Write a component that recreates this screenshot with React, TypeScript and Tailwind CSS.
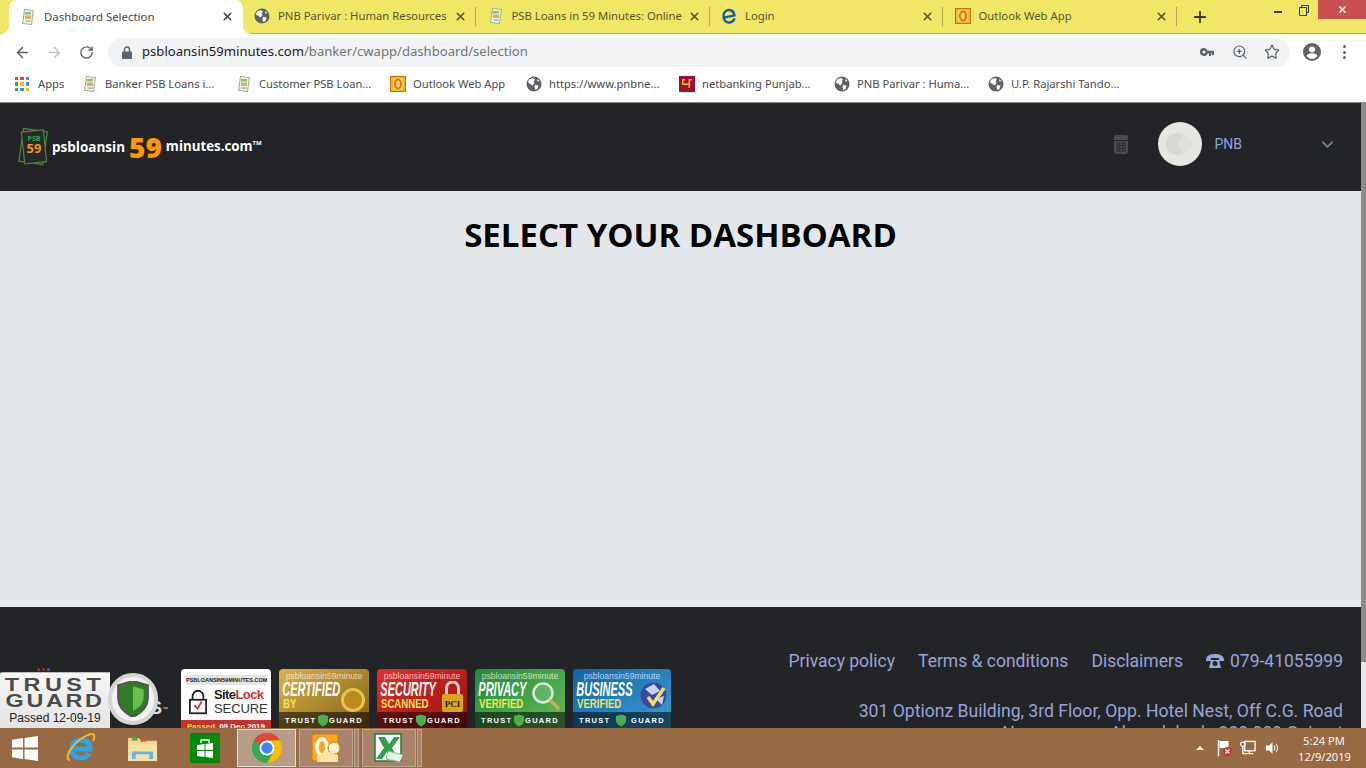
import { ArrowLeft, ArrowRight, ChevronDown, Plus, RotateCw, Star, X, ZoomIn } from "lucide-react";

// tab and bookmark favicons
function PsbIcon() {
  return (
    <svg width="16" height="16" viewBox="0 0 16 16" className="shrink-0">
      <rect x="3.5" y="1" width="9" height="14" fill="#eef3e4" stroke="#93b87a" strokeWidth="1" transform="rotate(8 8 8)" />
      <rect x="5" y="3" width="6" height="2.5" fill="#8dbb8f" />
      <rect x="5" y="6.5" width="6" height="3.5" fill="#e9a85a" />
      <rect x="5.5" y="11" width="5" height="2" fill="#a9c6d4" />
    </svg>
  );
}

function GlobeIcon() {
  return (
    <svg width="16" height="16" viewBox="0 0 16 16" className="shrink-0">
      <circle cx="8" cy="8" r="7.5" fill="#5f6368" />
      <path d="M3 3.5 L7 2 L9 3.5 L7.5 5.5 L8.5 7 L6.5 9.5 L4.5 8 L2 6.5 Z M9 9 L12.5 9.5 L11.5 13 L9.5 14 L8.5 11.5 Z M11 3 L13.5 5 L11.5 5.5 Z" fill="#fff" />
    </svg>
  );
}

function OutlookFav() {
  return (
    <svg width="16" height="16" viewBox="0 0 16 16" className="shrink-0">
      <rect x="0.5" y="0.5" width="15" height="15" fill="#f5b324" stroke="#c96f0a" />
      <rect x="3" y="2.5" width="10" height="11" fill="#fbd873" />
      <ellipse cx="8" cy="8" rx="3" ry="4.5" fill="none" stroke="#d9780c" strokeWidth="2.2" />
    </svg>
  );
}

function IeFav() {
  return (
    <svg width="16" height="18" viewBox="0 0 16 18" className="shrink-0">
      <path d="M2.5 9.5 H13.5 C13.5 5.5 11.5 3 8 3 C4.5 3 2.5 6 2.5 9.5 C2.5 13 4.5 15.5 8 15.5 C10.5 15.5 12 14.2 13 12.5" fill="none" stroke="#0b5ea8" strokeWidth="2.4" transform="rotate(-12 8 9)" />
    </svg>
  );
}

function PnbFav() {
  return (
    <svg width="16" height="16" viewBox="0 0 16 16" className="shrink-0">
      <rect width="16" height="16" fill="#9c1237" />
      <path d="M3 3 H6 V4.5 H4.5 V7.5 H9.5 V3 H13 V4.5 H11 V12 H9.5 V9 H3 Z" fill="#f5b324" />
    </svg>
  );
}

function Tab({ icon, title }: { icon: React.ReactNode; title: string }) {
  return (
    <div className="flex h-[33px] w-[233.5px] shrink-0 items-center pb-[1px] pl-[11.5px]">
      {icon}
      <span className="ml-[8px] flex-1 overflow-hidden whitespace-nowrap text-[11.3px] text-[#55533a]">{title}</span>
      <X size={13} strokeWidth={3} className="ml-[6px] shrink-0 text-[#55533a]" />
      <span className="ml-[8px] h-[19px] w-px shrink-0 bg-[#a9a352]" />
    </div>
  );
}

function Bookmark({ icon, title, width }: { icon: React.ReactNode; title: string; width: string }) {
  return (
    <div className={`flex shrink-0 items-center gap-[7px] ${width}`}>
      {icon}
      <span className="whitespace-nowrap text-[11.2px] text-[#4a4a4a]">{title}</span>
    </div>
  );
}

function MiniShield({ className }: { className?: string }) {
  return (
    <svg viewBox="0 0 10 12" className={className}>
      <path d="M5 0 L10 1.5 V6 C10 9 7 11 5 12 C3 11 0 9 0 6 V1.5 Z" fill="#4cae4c" />
    </svg>
  );
}

function SealBadge({ bg, width, big, small, art, status, date }: { bg: string; width: string; big: string; small: string; art: React.ReactNode; status: string; date: string }) {
  return (
    <div className={`relative h-[72px] shrink-0 overflow-hidden rounded-[4px] font-['Liberation_Sans',sans-serif] ${width} ${bg}`}>
      <p className="pt-[2px] text-center text-[8.6px] leading-[10px] text-white/70">psbloansin59minute</p>
      <p className="origin-left scale-x-[0.55] whitespace-nowrap pl-[6px] text-[20px] font-bold italic leading-[17px] text-white">{big}</p>
      <p className="origin-left scale-x-[0.8] whitespace-nowrap pl-[5px] text-[12px] font-bold leading-[13px] text-[#f2e65a]">{small}</p>
      <div className="absolute right-[4px] top-[12px]">{art}</div>
      <div className="absolute left-0 right-0 top-[43px] h-[29px] bg-black/55 px-[6px] text-white">
        <div className="flex items-center justify-between pt-[2px] text-[7.5px] font-bold leading-[10px] tracking-[1.3px]">
          <span>TRUST</span>
          <MiniShield className="h-[13px] w-[10px]" />
          <span>GUARD</span>
        </div>
        <div className="flex justify-between text-[8px] leading-[9px] text-white/80">
          <span>{status}</span>
          <span>{date}</span>
        </div>
      </div>
    </div>
  );
}

function TaskBtn({ children, active }: { children: React.ReactNode; active?: boolean }) {
  return (
    <div className={`flex h-[38px] shrink-0 items-center justify-center border ${active ? "w-[59px] border-[#eadfd6] bg-[#b99c87]" : "w-[54px] border-[#c2a58f] bg-[#a98369]"}`}>
      {children}
    </div>
  );
}

export default function App() {
  return (
    <div className="flex h-screen w-[1366px] flex-col overflow-hidden bg-white font-['Noto_Sans',sans-serif]">
      {/* tab strip */}
      <div className="relative flex h-[34px] shrink-0 items-start border-b border-[#b3ad55] bg-[#f0e766] pl-[9px]">
        <div className="relative flex h-[34px] w-[233.5px] shrink-0 items-center rounded-t-[8px] bg-white pb-[1px] pl-[11px] pr-[9px]">
          <span className="absolute bottom-0 left-[-8px] h-[8px] w-[8px] bg-white">
            <span className="block h-full w-full rounded-br-[8px] bg-[#f0e766]" />
          </span>
          <PsbIcon />
          <span className="ml-[8px] flex-1 whitespace-nowrap text-[11.4px] text-[#45474a]">Dashboard Selection</span>
          <X size={13} strokeWidth={3} className="text-[#45474a]" />
          <span className="absolute bottom-0 right-[-8px] h-[8px] w-[8px] bg-white">
            <span className="block h-full w-full rounded-bl-[8px] bg-[#f0e766]" />
          </span>
        </div>
        <Tab icon={<GlobeIcon />} title="PNB Parivar : Human Resources" />
        <Tab icon={<PsbIcon />} title="PSB Loans in 59 Minutes: Online" />
        <Tab icon={<IeFav />} title="Login" />
        <Tab icon={<OutlookFav />} title="Outlook Web App" />
        <Plus size={18} strokeWidth={2.5} className="ml-[14px] mt-[8px] text-[#3c3c32]" />
        {/* window buttons */}
        <div className="absolute right-0 top-0 flex items-start">
          <span className="mr-[17px] mt-[11px] h-[2px] w-[8px] bg-[#333]" />
          <svg width="10" height="11" viewBox="0 0 10 11" className="mr-[9px] mt-[5px]">
            <path d="M2.5 2.5 V0.5 H9.5 V7.5 H7.5 M0.5 2.5 H7.5 V10.5 H0.5 Z" fill="none" stroke="#333" />
          </svg>
          <div className="flex h-[19px] w-[48px] items-center justify-center bg-[#c75050]">
            <X size={11} strokeWidth={3} className="text-white" />
          </div>
        </div>
      </div>

      {/* address bar */}
      <div className="flex h-[36px] shrink-0 items-center bg-white pl-[14px]">
        <ArrowLeft size={17} strokeWidth={2.2} className="text-[#5f6368]" />
        <ArrowRight size={17} strokeWidth={2.2} className="ml-[15px] text-[#c0c2c4]" />
        <RotateCw size={15} strokeWidth={2.2} className="ml-[16px] text-[#5f6368]" />
        <div className="ml-[14px] flex h-[29px] w-[1182px] items-center rounded-full bg-[#f1f3f4] pl-[14px] pr-[10px]">
          <svg width="10" height="13" viewBox="0 0 10 13" className="shrink-0">
            <path d="M2.5 6 V3.5 A2.5 2.5 0 0 1 7.5 3.5 V6" fill="none" stroke="#5f6368" strokeWidth="1.4" />
            <rect y="5.5" width="10" height="7.5" rx="1" fill="#5f6368" />
          </svg>
          <span className="ml-[10px] flex-1 text-[13.1px] text-[#6f7478]">
            <span className="text-[#202124]">psbloansin59minutes.com</span>/banker/cwapp/dashboard/selection
          </span>
          <svg width="14" height="8" viewBox="0 0 14 8" className="mr-[18px] shrink-0">
            <path d="M4 0 A4 4 0 1 0 7.6 5.5 H9 V8 H11 V5.5 H12 V7 H14 V2.7 H7.6 A4 4 0 0 0 4 0 Z M4 2.5 A1.5 1.5 0 1 1 4 5.5 A1.5 1.5 0 0 1 4 2.5 Z" fill="#5f6368" fillRule="evenodd" />
          </svg>
          <ZoomIn size={16} strokeWidth={1.8} className="mr-[16px] text-[#5f6368]" />
          <Star size={16} strokeWidth={1.8} className="text-[#5f6368]" />
        </div>
        <svg width="18" height="18" viewBox="0 0 18 18" className="ml-[13px] shrink-0">
          <circle cx="9" cy="9" r="9" fill="#5f6368" />
          <circle cx="9" cy="6.5" r="3" fill="#fff" />
          <path d="M3.5 13 C4.5 10.8 7 10.2 9 10.2 C11 10.2 13.5 10.8 14.5 13 C13 15 11 15.8 9 15.8 C7 15.8 5 15 3.5 13 Z" fill="#fff" />
        </svg>
        <div className="ml-[22px] flex flex-col gap-[2.5px]">
          <span className="h-[3px] w-[3px] rounded-full bg-[#5f6368]" />
          <span className="h-[3px] w-[3px] rounded-full bg-[#5f6368]" />
          <span className="h-[3px] w-[3px] rounded-full bg-[#5f6368]" />
        </div>
      </div>

      {/* bookmarks */}
      <div className="flex h-[33px] shrink-0 items-center border-b border-[#8b8b8b] bg-white pb-[4px] pl-[15px]">
        <div className="flex w-[67px] shrink-0 items-center gap-[9px]">
          <div className="grid h-[14px] w-[14px] grid-cols-3 gap-[2px]">
            {["#ea4335", "#ea4335", "#4285f4", "#34a853", "#fbbc05", "#4285f4", "#34a853", "#4285f4", "#fbbc05"].map((c, i) => (
              <span key={i} style={{ backgroundColor: c }} />
            ))}
          </div>
          <span className="text-[11.2px] text-[#4a4a4a]">Apps</span>
        </div>
        <Bookmark icon={<PsbIcon />} title="Banker PSB Loans i..." width="w-[154px]" />
        <Bookmark icon={<PsbIcon />} title="Customer PSB Loan..." width="w-[154px]" />
        <Bookmark icon={<OutlookFav />} title="Outlook Web App" width="w-[136px]" />
        <Bookmark icon={<GlobeIcon />} title="https://www.pnbne..." width="w-[153px]" />
        <Bookmark icon={<PnbFav />} title="netbanking Punjab..." width="w-[155px]" />
        <Bookmark icon={<GlobeIcon />} title="PNB Parivar : Huma..." width="w-[154px]" />
        <Bookmark icon={<GlobeIcon />} title="U.P. Rajarshi Tando..." width="w-[140px]" />
      </div>

      {/* page */}
      <div className="relative flex min-h-0 flex-1 overflow-hidden">
        <div className="min-w-0 flex-1">
          <header className="flex h-[88px] items-center bg-[#232427] pl-[17px] pr-[24px] font-['Open_Sans',sans-serif]">
            <svg width="34" height="40" viewBox="0 0 34 40" className="shrink-0">
              <rect x="4" y="3" width="24" height="33" fill="none" stroke="#4d8a35" strokeWidth="1.2" transform="rotate(8 16 20)" />
              <rect x="6" y="4" width="22" height="32" fill="#26282b" stroke="#4d8a35" strokeWidth="1.2" transform="rotate(-6 16 20)" />
              <text x="17" y="14" textAnchor="middle" fontSize="7" fontWeight="700" fill="#2aa84a">PSB</text>
              <text x="17" y="26" textAnchor="middle" fontSize="13" fontWeight="700" fill="#f7941d">59</text>
            </svg>
            <span className="ml-[1px] text-[13.5px] font-bold text-white">psbloansin</span>
            <span className="ml-[4px] text-[28px] font-extrabold leading-none text-[#ff9800]">59</span>
            <span className="ml-[4px] text-[13.3px] font-bold text-white">minutes.com</span>
            <span className="mb-[8px] text-[6px] font-bold text-white">TM</span>
            <svg width="14" height="19" viewBox="0 0 14 19" className="mb-[6px] ml-auto shrink-0">
              <path d="M2 0 H12 A2 2 0 0 1 14 2 V5 H0 V2 A2 2 0 0 1 2 0 Z" fill="#4b4c4f" />
              <path d="M0 6 H14 V17 A2 2 0 0 1 12 19 H2 A2 2 0 0 1 0 17 Z" fill="#4b4c4f" />
              <path d="M3 8 H11 V16 H3 Z M5.5 8 V16 M8.5 8 V16 M3 10.5 H11 M3 13.5 H11" fill="none" stroke="#232427" strokeWidth="0.8" />
            </svg>
            <div className="relative mb-[6px] ml-[30px] h-[44px] w-[44px] shrink-0 rounded-full bg-[#e6e7e3]">
              <span className="absolute left-[8px] top-[11px] h-[22px] w-[22px] rounded-full bg-[#d7d8d6]" />
              <span className="absolute left-[20px] top-[15px] h-[15px] w-[15px] rounded-full bg-[#dfe0de]" />
            </div>
            <span className="mb-[6px] ml-[12px] font-['Roboto',sans-serif] text-[14px] text-[#8ea6df]">PNB</span>
            <ChevronDown size={19} strokeWidth={2} className="mb-[6px] ml-[76px] text-[#7c82a8]" />
          </header>

          <main className="h-[416px] bg-[#e4e7ea] pt-[22px]">
            <h1 className="text-center font-['Open_Sans',sans-serif] text-[33px] font-bold leading-[44px] text-black">SELECT YOUR DASHBOARD</h1>
          </main>

          <footer className="relative flex h-[160px] justify-between bg-[#232427] pr-[18px] font-['Roboto',sans-serif] text-[#97a5d8]">
            <div className="flex items-start gap-[8px] pl-[181px] pt-[62px]">
              <div className="h-[72px] w-[90px] shrink-0 overflow-hidden rounded-[4px] bg-white font-['Liberation_Sans',sans-serif]">
                <p className="mx-[5px] mt-[6px] bg-[#e4e4e4] text-center text-[5.5px] font-bold leading-[10px] text-[#222]">PSBLOANSIN59MINUTES.COM</p>
                <div className="flex items-center gap-[7px] pl-[8px] pt-[3px]">
                  <svg width="18" height="26" viewBox="0 0 20 27" className="shrink-0">
                    <path d="M4 11 V7 A6 6 0 0 1 16 7 V11" fill="none" stroke="#222" strokeWidth="2" />
                    <rect x="1" y="11" width="18" height="15" fill="#fff" stroke="#222" strokeWidth="2" />
                    <path d="M6 17 L9.5 21 L14 13" fill="none" stroke="#d32f2f" strokeWidth="2" />
                  </svg>
                  <div className="text-[13px] leading-[14px]">
                    <p className="font-bold tracking-[-0.6px] text-[#222]">Site<span className="text-[#d32f2f]">Lock</span></p>
                    <p className="tracking-[-0.1px] text-[#333]">SECURE</p>
                  </div>
                </div>
                <div className="mt-[4px] flex h-[20px] justify-between bg-[#c8322c] px-[6px] pt-[2px] text-[8px] font-bold leading-[10px] text-white">
                  <span className="text-[#d9e04a]">Passed</span>
                  <span>09 Dec 2019</span>
                </div>
              </div>
              <SealBadge
                bg="bg-gradient-to-br from-[#dcb24a] to-[#7a5a10]"
                width="w-[90px]"
                big="CERTIFIED"
                small="BY"
                status="Active"
                date="12.09.19"
                art={<span className="mt-[7px] block h-[24px] w-[24px] rounded-full border-[3px] border-[#e8c24a] bg-[#b98a1f]" />}
              />
              <SealBadge
                bg="bg-gradient-to-br from-[#e0302a] to-[#8f0d0d]"
                width="w-[90px]"
                big="SECURITY"
                small="SCANNED"
                status="Valid Thru"
                date="12.12.19"
                art={
                  <svg width="21" height="31" viewBox="0 0 21 31">
                    <path d="M4.5 14 V7 A6 6 0 0 1 16.5 7 V14" fill="none" stroke="#c9c9c9" strokeWidth="3" />
                    <rect y="13" width="21" height="18" rx="2" fill="#d9a520" />
                    <text x="10.5" y="26" textAnchor="middle" fontSize="9" fontWeight="700" fontFamily="Liberation Serif, serif" fill="#222">PCI</text>
                  </svg>
                }
              />
              <SealBadge
                bg="bg-gradient-to-br from-[#1f8a3a] to-[#66c25c]"
                width="w-[90px]"
                big="PRIVACY"
                small="VERIFIED"
                status="Active"
                date="12.09.19"
                art={
                  <svg width="30" height="30" viewBox="0 0 30 30">
                    <circle cx="12" cy="12" r="9.5" fill="#ffffff22" stroke="#dfeadb" strokeWidth="2.5" />
                    <path d="M19 19 L28 28" stroke="#d9a35a" strokeWidth="3.5" />
                  </svg>
                }
              />
              <SealBadge
                bg="bg-gradient-to-br from-[#0f64a6] to-[#41a3d8]"
                width="w-[98px]"
                big="BUSINESS"
                small="VERIFIED"
                status="Active"
                date="12.09.19"
                art={
                  <svg width="27" height="29" viewBox="0 0 27 29">
                    <circle cx="13.5" cy="14.5" r="13" fill="#3b4aa0" />
                    <path d="M5 8 L14 3 L20 10 L12 14 Z M16 18 L24 15 L22 24 Z" fill="#c9d3ec" />
                    <path d="M8 16 L13 23 L24 7" fill="none" stroke="#f5e05a" strokeWidth="3.5" />
                  </svg>
                }
              />
            </div>
            <div className="pt-[42px] text-right">
              <div className="flex items-center justify-end gap-[23px] text-[17.5px] leading-[24px]">
                <span>Privacy policy</span>
                <span>Terms &amp; conditions</span>
                <span>Disclaimers</span>
                <span className="flex items-center gap-[6px]">
                  <svg width="18" height="14" viewBox="0 0 18 14" className="shrink-0">
                    <path d="M0 5 C1 1 5 0 9 0 C13 0 17 1 18 5 V7 H13 V4 H5 V7 H0 Z M3 14 L5 6 H13 L15 14 Z" fill="#97a5d8" />
                    <circle cx="9" cy="9.5" r="2.5" fill="#232427" />
                  </svg>
                  079-41055999
                </span>
              </div>
              <p className="mt-[27px] text-[17.6px] leading-[22px]">301 Optionz Building, 3rd Floor, Opp. Hotel Nest, Off C.G. Road</p>
              <p className="text-[17.6px] leading-[22px]">Navrangpura, Ahmedabad - 380 009 Gujarat</p>
            </div>
            {/* trust guard floating seal */}
            <div className="absolute left-0 top-[65px] flex items-start">
              <div className="flex absolute left-[37px] top-[-4px] gap-[2px]">
                <span className="h-[3px] w-[3px] rounded-full bg-[#a33]" />
                <span className="h-[3px] w-[3px] rounded-full bg-[#a33]" />
                <span className="h-[3px] w-[3px] rounded-full bg-[#46a]" />
              </div>
              <div className="h-[56px] w-[110px] shrink-0 rounded-tl-[2px] border-t border-[#bbb] bg-gradient-to-b from-[#f7f7f7] to-[#e4e4e4] pt-[4px] text-center font-['Liberation_Sans',sans-serif]">
                <p className="scale-x-[1.3] text-[18px] font-bold leading-[16px] tracking-[3.5px] text-[#4a4a4a]">TRUST</p>
                <p className="scale-x-[1.3] text-[18px] font-bold leading-[16px] tracking-[2px] text-[#4a4a4a]">GUARD</p>
                <p className="mt-[3px] text-[12px] leading-[13px] text-[#222]">Passed 12-09-19</p>
              </div>
              <div className="relative z-10 ml-[-2px] mt-[1px] flex h-[52px] w-[50px] shrink-0 items-center justify-center rounded-full border-[4px] border-[#d5d5d5] bg-[#f2f2f2]">
                <svg width="32" height="36" viewBox="0 0 28 34">
                  <path d="M14 0 L28 4 V16 C28 25 20 31 14 34 C8 31 0 25 0 16 V4 Z" fill="#2f7d22" stroke="#555" strokeWidth="2" />
                  <path d="M14 5 L24 8 V16 C24 22 18 26 14 28 Z" fill="#6ac04a" />
                </svg>
              </div>
              <span className="ml-[-8px] mt-[26px] whitespace-nowrap font-['Liberation_Sans',sans-serif] text-[18px] font-bold leading-[20px] text-[#dcdcdc]">S<sup className="text-[6px] font-normal">™</sup></span>
            </div>
          </footer>
        </div>
        {/* scrollbar */}
        <div className="flex w-[5px] shrink-0 flex-col bg-[#e6e8ea]">
          <div className="h-[559px] bg-[#8c8c8c]" />
        </div>
      </div>

      {/* windows taskbar */}
      <div className="flex h-[40px] shrink-0 items-center bg-[#976a43] font-['Open_Sans',sans-serif]">
        <svg width="26" height="25" viewBox="0 0 27 26" className="ml-[12px] shrink-0">
          <path d="M0 4 L11.5 2.2 V12 H0 Z M13 2 L27 0 V12 H13 Z M0 14 H11.5 V23.8 L0 22 Z M13 14 H27 V26 L13 24 Z" fill="#fff" />
        </svg>
        <svg width="30" height="30" viewBox="0 0 30 30" className="ml-[28px] shrink-0">
          <path d="M6 16 H24 C24 10 21 7 15 7 C9 7 6 11 6 16 C6 21 9 25 15 25 C19 25 21.5 23 23 20.5" fill="none" stroke="#2ba6e8" strokeWidth="5" />
          <path d="M4 27 C0 27 1 20 8 12 C15 4 26 -1 28 2 C29 4 28 6 27 8" fill="none" stroke="#f2b632" strokeWidth="2" />
        </svg>
        <svg width="31" height="27" viewBox="0 0 32 28" className="ml-[31px] shrink-0">
          <path d="M1 3 H12 L15 6 H31 V26 H1 Z" fill="#f5d98a" />
          <rect x="5" y="3" width="6" height="3" fill="#4caf50" />
          <rect x="14" y="4" width="6" height="3" fill="#e25241" />
          <rect x="1" y="10" width="30" height="17" fill="#f7e2a6" />
          <path d="M5 25 V17 H27 V25 H23 V20 H9 V25 Z" fill="#5cb8e6" />
        </svg>
        <div className="ml-[32px] flex h-[30px] w-[30px] shrink-0 items-center justify-center bg-[#078a0b]">
          <svg width="18" height="20" viewBox="0 0 18 20">
            <path d="M5 5 V2 H13 V5" fill="none" stroke="#fff" strokeWidth="1.4" />
            <path d="M1 7 L8.5 6 V12 H1 Z M9.5 6 L17 5 V12 H9.5 Z M1 13 H8.5 V19 L1 18 Z M9.5 13 H17 V20 L9.5 19 Z" fill="#fff" />
          </svg>
        </div>
        <div className="ml-[17px]">
          <TaskBtn active>
            <svg width="30" height="30" viewBox="0 0 30 30">
              <circle cx="15" cy="15" r="15" fill="#34a853" />
              <path d="M15 0 A15 15 0 0 1 28 7.5 L15 7.5 A7.5 7.5 0 0 0 8.5 11.2 L2 7.5 A15 15 0 0 1 15 0 Z" fill="#ea4335" />
              <path d="M28 7.5 A15 15 0 0 1 15 30 L21.5 18.7 A7.5 7.5 0 0 0 15 7.5 Z" fill="#fbbc05" />
              <circle cx="15" cy="15" r="7.5" fill="#fff" />
              <circle cx="15" cy="15" r="5.7" fill="#4285f4" />
            </svg>
          </TaskBtn>
        </div>
        <div className="ml-[3px]">
          <TaskBtn>
            <svg width="30" height="30" viewBox="0 0 30 30">
              <rect x="1" y="1" width="26" height="27" rx="2" fill="#f6a81f" stroke="#d9780c" />
              <ellipse cx="11" cy="14" rx="5" ry="8" fill="none" stroke="#fff" strokeWidth="3.5" />
              <circle cx="23" cy="15" r="6" fill="#fff3d0" stroke="#d9780c" />
              <path d="M6 22 L16 18 L27 22 V29 H6 Z" fill="#fbe3a4" />
            </svg>
          </TaskBtn>
        </div>
        <div className="ml-[1px] h-[38px] w-[5px] shrink-0 border border-[#c2a58f] bg-[#a98369]" />
        <div className="ml-[3px]">
          <TaskBtn>
            <svg width="30" height="30" viewBox="0 0 30 30">
              <rect x="1" y="1" width="26" height="27" fill="#fff" stroke="#1f7a37" strokeWidth="1.5" />
              <path d="M4 4 H11 L15 11 L20 4 H26 L18 15 L24 26 H17 L13 19 L8 26 H2 L10 15 Z" fill="#2f9e4f" />
              <path d="M14 18 L29 22 L26 29 L12 26 Z" fill="#e8f3ea" stroke="#7cb98a" />
            </svg>
          </TaskBtn>
        </div>
        <div className="ml-[1px] h-[38px] w-[5px] shrink-0 border border-[#c2a58f] bg-[#a98369]" />

        <div className="ml-auto flex items-center pr-[16px]">
          <span className="mr-[12px] h-0 w-0 border-x-[4px] border-b-[4px] border-x-transparent border-b-white" />
          <svg width="17" height="18" viewBox="0 0 16 18" className="mr-[7px] shrink-0">
            <path d="M2 1 V17" stroke="#fff" strokeWidth="1.5" />
            <path d="M3 2 H12 V9 H3 Z" fill="#fff" />
            <circle cx="11" cy="12.5" r="4.5" fill="#d32f2f" />
            <path d="M9 10.5 L13 14.5 M13 10.5 L9 14.5" stroke="#fff" strokeWidth="1.2" />
          </svg>
          <svg width="16" height="18" viewBox="0 0 17 18" className="mr-[9px] shrink-0">
            <rect x="5" y="2" width="11" height="10" fill="none" stroke="#fff" strokeWidth="1.4" />
            <circle cx="3" cy="5" r="2.3" fill="none" stroke="#fff" strokeWidth="1.2" />
            <path d="M3 8 V15 H14 M10 12 V15" stroke="#fff" strokeWidth="1.4" fill="none" />
          </svg>
          <svg width="15" height="14" viewBox="0 0 18 16" className="mr-[18px] shrink-0">
            <path d="M1 5 H5 L9 1 V15 L5 11 H1 Z" fill="#fff" />
            <path d="M11 5 Q13 8 11 11 M13.5 3 Q17 8 13.5 13" fill="none" stroke="#fff" strokeWidth="1.2" />
          </svg>
          <div className="w-[52px] whitespace-nowrap pt-[2px] text-center text-[11.2px] leading-[16px] text-white">
            <p>5:24 PM</p>
            <p>12/9/2019</p>
          </div>
        </div>
      </div>
    </div>
  );
}
